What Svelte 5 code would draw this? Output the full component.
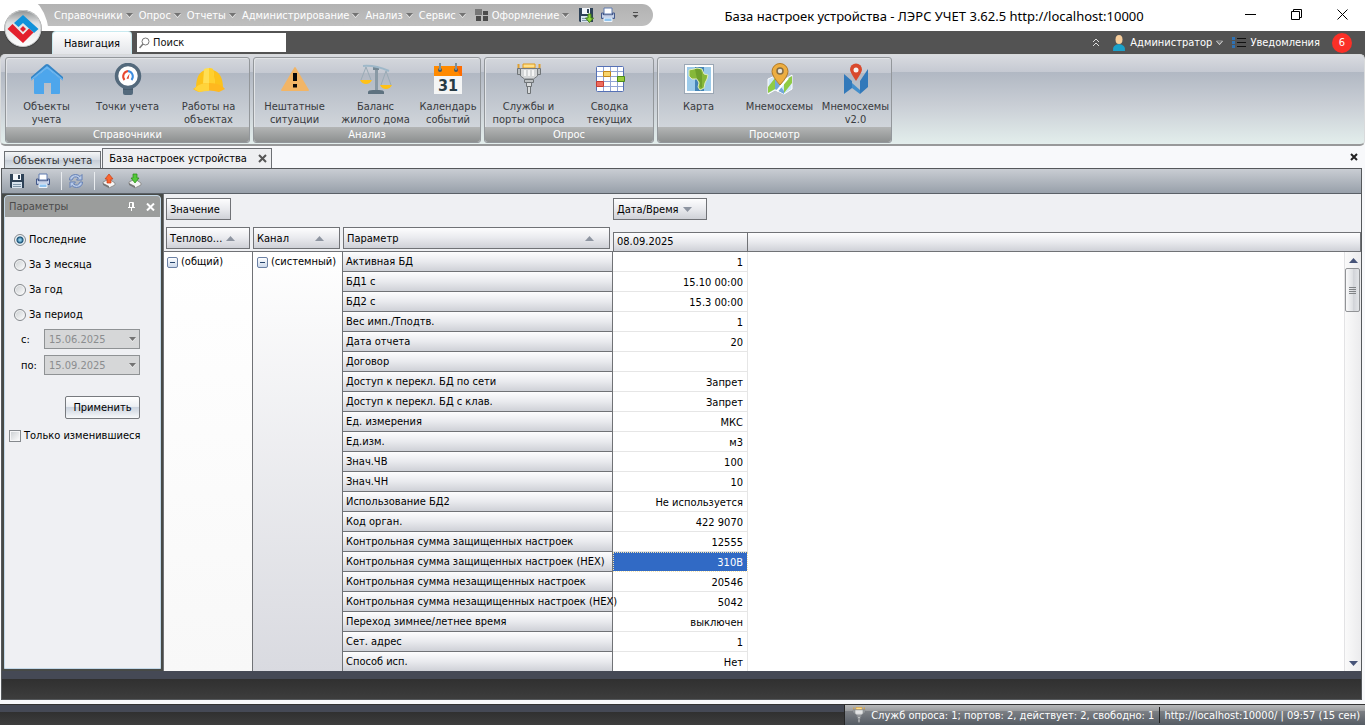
<script lang="ts">
  const menu = ["Справочники", "Опрос", "Отчеты", "Администрирование", "Анализ", "Сервис"];

  const ribbon = [
    {
      title: "Справочники",
      items: [
        { icon: "house", label: "Объекты\nучета" },
        { icon: "gauge", label: "Точки учета" },
        { icon: "helmet", label: "Работы на\nобъектах" },
      ],
    },
    {
      title: "Анализ",
      items: [
        { icon: "warning", label: "Нештатные\nситуации" },
        { icon: "scales", label: "Баланс\nжилого дома" },
        { icon: "calendar", label: "Календарь\nсобытий", size: "small" },
      ],
    },
    {
      title: "Опрос",
      roomy: true,
      items: [
        { icon: "port", label: "Службы и\nпорты опроса" },
        { icon: "grid", label: "Сводка\nтекущих" },
      ],
    },
    {
      title: "Просмотр",
      items: [
        { icon: "map", label: "Карта" },
        { icon: "pin", label: "Мнемосхемы" },
        { icon: "pin2", label: "Мнемосхемы\nv2.0", size: "medium" },
      ],
    },
  ];

  const rows = [
    ["Активная БД", "1"],
    ["БД1 с", "15.10 00:00"],
    ["БД2 с", "15.3 00:00"],
    ["Вес имп./Тподтв.", "1"],
    ["Дата отчета", "20"],
    ["Договор", ""],
    ["Доступ к перекл. БД по сети", "Запрет"],
    ["Доступ к перекл. БД с клав.", "Запрет"],
    ["Ед. измерения", "МКС"],
    ["Ед.изм.", "м3"],
    ["Знач.ЧВ", "100"],
    ["Знач.ЧН", "10"],
    ["Использование БД2", "Не используется"],
    ["Код орган.", "422 9070"],
    ["Контрольная сумма защищенных настроек", "12555"],
    ["Контрольная сумма защищенных настроек (HEX)", "310B"],
    ["Контрольная сумма незащищенных настроек", "20546"],
    ["Контрольная сумма незащищенных настроек (HEX)", "5042"],
    ["Переход зимнее/летнее время", "выключен"],
    ["Сет. адрес", "1"],
    ["Способ исп.", "Нет"],
  ];

  const ranges = ["Последние", "За 3 месяца", "За год", "За период"];

  let range = $state("Последние");
  let selectedRow = $state(15);
  let onlyChanged = $state(false);
  let search = $state("");
</script>

{#snippet arrow()}
  <svg class="arrow" width="7" height="5" viewBox="0 0 7 5" aria-hidden="true">
    <path d="M0 1 3.500 5 7 1z" fill="#eee" />
    <path d="M0 0h7L3.500 4z" fill="#737373" />
  </svg>
{/snippet}

{#snippet floppy(withArrow: boolean)}
  <svg width="16" height="16" viewBox="0 0 16 16" aria-hidden="true">
    <path d="M1 1h14v14H2l-1-1z" fill="#2e4257" />
    <path d="M4 1h8v6H4z" fill="#f2f6fa" />
    <path d="M9 2h2v4H9z" fill="#2e4257" />
    <path d="M3 9h10v6H3z" fill="#d7e3ee" />
    <path d="M4 11.500h8M4 13.500h8" stroke="#7e95a8" />
    {#if withArrow}
      <path d="M10 7h3v4h2.500l-4 4.500-4-4.500H10z" fill="#8fd23a" stroke="#3d7a16" />
    {/if}
  </svg>
{/snippet}

{#snippet printer()}
  <svg width="16" height="16" viewBox="0 0 16 16" aria-hidden="true">
    <path d="M4 1h8v6H4z" fill="#fff" stroke="#5e7bb0" />
    <path d="M1.500 6h2v2h9V6h2v5.500h-13z" fill="#a9b9d8" stroke="#44598a" />
    <path d="M2 9h12" stroke="#e4ecf8" />
    <path d="M4 11h8v3.500H4z" fill="#8fc4f0" stroke="#eef4fb" />
  </svg>
{/snippet}

{#snippet port(size: number)}
  <svg width={size} height={size} viewBox="0 0 32 32" aria-hidden="true">
    <path d="M10 1h12v4H10z" fill="#ffe08a" stroke="#e09a1c" />
    <path d="M5.500 1v4M26.500 1v4" stroke="#e0a030" stroke-width="2" />
    <path d="M4.500 5.500h3v6h-3zM24.500 5.500h3v6h-3z" fill="#b9bdbf" stroke="#707578" />
    <path d="M7.500 5.500h17V13l-4 3h-9l-4-3z" fill="#d4d6d7" stroke="#777b7e" />
    <path d="M11 7h2v6h-2zM15 7h2v6h-2zM19 7h2v6h-2z" fill="#f4f4f4" />
    <path d="M11.500 16.500h9v3h-9z" fill="#bcc0c2" stroke="#6e7376" />
    <path d="M13.500 19.500h5v4h-5zM14.500 23.500h3v7h-3z" fill="#d8dadb" stroke="#6e7376" />
  </svg>
{/snippet}

{#snippet ribbonIcon(name: string)}
  {#if name === "port"}
    {@render port(32)}
  {:else}
    <svg width="32" height="32" viewBox="0 0 32 32" aria-hidden="true">
      {#if name === "house"}
        <path d="M3 15.500 16 5l13 10.500V30q0 1-1 1h-8V20h-7v11H4q-1 0-1-1z" fill="#4da6ec" />
        <path d="M0 14 14.500 1.500q1.500-1 3 0L32 14v3.500L16 4.500 0 17.500z" fill="#3585c6" />
        <path d="M0 16 16 3l16 13v1.500L16 5 0 17.500z" fill="#67b7f5" />
      {:else if name === "gauge"}
        <path d="M11 22h10v8q0 2-2 2h-6q-2 0-2-2z" fill="#53697c" />
        <path d="M11 24h10v3H11z" fill="#465a6b" />
        <circle cx="16" cy="13" r="11.500" fill="#fff" stroke="#53697c" stroke-width="3.500" />
        <path d="M12.500 17A5.500 5.500 0 0 1 16 8" fill="none" stroke="#e8452f" stroke-width="2" />
        <path d="M16 8a5.500 5.500 0 0 1 3.500 9" fill="none" stroke="#3e8de0" stroke-width="2" />
        <path d="m14.500 15.500 3-5-1 5.500z" fill="#e0402c" />
      {:else if name === "helmet"}
        <path d="M3 25q0-15 9-18 4-2 8 0 10 3 10 18z" fill="#fcc21b" />
        <path d="M11 6q5-2 9 0l2 15H10z" fill="#ffdf55" />
        <path d="M16 5q2 0 4 1l2 15h-6z" fill="#ffd02d" />
        <path d="M3 24Q7 20 16 20t14 4l2 2q-4 2-6 3-10-3-20 0-3-1-6-3z" fill="#ffb81f" />
        <path d="M3 24Q7 20 16 20v8q-5 0-10 1l-5-3z" fill="#ffd43b" />
      {:else if name === "warning"}
        <path d="M15 5q1-2 2 0l13 22q0 1-1 1H3q-1 0-1-1z" fill="#f2b566" />
        <path d="M14 10h4v8h-4zM14 21h4v3.500h-4z" fill="#080808" />
      {:else if name === "scales"}
        <path d="M15 3h3v25h-3z" fill="#8999a5" />
        <path d="M13 4h6v3h-6z" fill="#758894" />
        <path d="M8 29q0-2 5-2h6q5 0 5 2v2H8z" fill="#5e7280" />
        <path d="M3 3q12-1 26 5" fill="none" stroke="#9eb8c9" stroke-width="2" />
        <path d="M6 4 1 17M6 4l5 13M26 8l-5 14m5-14 5 14" stroke="#9aabb6" fill="none" />
        <path d="M0 17h12q-2 4-6 4t-6-4zM20 22h12q-2 4-6 4t-6-4z" fill="#ffc117" />
      {:else if name === "calendar"}
        <path d="M2 3h28v12H2z" fill="#ff8a00" />
        <path d="M22 3h8v12z" fill="#ff6b00" />
        <path d="M2 13h28v18H2z" fill="#f4f5f5" />
        <circle cx="8" cy="7" r="2" fill="#455a64" />
        <circle cx="24" cy="7" r="2" fill="#455a64" />
        <path d="M8 0v7M24 0v7" stroke="#7b919d" stroke-width="2" />
        <text x="16" y="28" text-anchor="middle" class="day">31</text>
      {:else if name === "grid"}
        <rect x="2.500" y="3.500" width="27" height="25" rx="1" fill="#fff" stroke="#5570b5" />
        <path d="M3 8.500h26M3 13.500h26M3 18.500h26M3 23.500h26M9.500 4v24M16.500 4v24M23.500 4v24" stroke="#91a4d5" />
        <path d="M9.500 8.500h7v5h-7z" fill="#f8d46c" stroke="#c2861a" />
        <path d="M23.500 13.500h7v5h-7z" fill="#9acb3b" stroke="#4b8a1a" />
        <path d="M2.500 18.500h7v5h-7z" fill="#ee6d60" stroke="#c63c30" />
      {:else if name === "map"}
        <rect x="1.500" y="1.500" width="29" height="29" fill="#fdfefe" stroke="#9ba7b5" />
        <path d="M4 4h24v24H4z" fill="#9ccbea" />
        <path d="M12 4h9v24h-9z" fill="#4484b6" />
        <path
          d="m6 7 5-1 3-1 5 1 2 5 4 1-1 4-2 4-1 5-4 2-2-3 1-4-2-4-5 0-3-3z"
          fill="#86b83a"
          stroke="#e3edbd"
        />
        <path d="M12 6h5l2 4v15l-2-1v-5l-3-3z" fill="#55881f" opacity="0.500" />
      {:else if name === "pin"}
        <path d="m4 16 7-3 9 4 8-5v14l-8 5-9-4-7 4z" fill="#cfe6f8" stroke="#fff" />
        <path d="m4 24 7-9v11l-7 4zM20 18l8-5v7l-8 10z" fill="#8fcb46" />
        <path d="m11 16 9 12v3l-9-5z" fill="#73a7d9" />
        <path d="M24 15 13 28" stroke="#fff" stroke-width="2" />
        <path
          d="M16 22Q8 13 8 8.500a8 8 0 0 1 16 0Q24 13 16 22z"
          fill="#edae42"
          stroke="#b37922"
        />
        <circle cx="16" cy="8" r="3" fill="#e8e4da" stroke="#826c48" stroke-width="1.500" />
      {:else}
        <path d="m4 11 8 7v7l-8 6zM20 18l8-12v18l-8 7z" fill="#3279ba" />
        <path d="M12 20v5l8 6v-4z" fill="#438ecb" />
        <path d="M16 18Q10 9 10 6.500a6 6 0 0 1 12 0Q22 9 16 18z" fill="#d9492d" />
        <circle cx="16" cy="7" r="2.500" fill="#f7f2ef" />
      {/if}
    </svg>
  {/if}
{/snippet}

{#snippet sortMark(down: boolean)}
  <svg width="9" height="5" viewBox="0 0 9 5" aria-hidden="true">
    <path d={down ? "M0 0h9L4.5 5z" : "M0 5h9L4.5 0z"} fill="#8e95a1" />
  </svg>
{/snippet}

<div class="app">
  <header class="titlebar">
    <svg class="logo" width="52" height="54" viewBox="0 0 52 54" aria-label="ЛЭРС УЧЕТ">
      <defs>
        <linearGradient id="orb" x2="0" y2="1">
          <stop offset="0" stop-color="#8e9192" />
          <stop offset="0.350" stop-color="#dfe1e2" />
          <stop offset="1" stop-color="#fff" />
        </linearGradient>
      </defs>
      <path d="M0 0h34q12 10 15 31H0z" fill="#fff" />
      <circle cx="23" cy="29" r="19" fill="#343434" opacity="0.500" />
      <circle cx="23" cy="28.500" r="18" fill="url(#orb)" stroke="#c8cacb" />
      <path d="m23 15 15.500 14-4.500 4-11-10-4.500 4-4.500-4z" fill="#1192da" />
      <path d="m12.500 24 5 5 5.500 5.500 6-6 4.500 4L23 43 7.500 29z" fill="#e3202d" />
      <path d="m23 26 3 3-3 3-3-3z" fill="#e3202d" />
    </svg>
    <nav class="menu">
      {#each menu as item}
        <button>{item}{@render arrow()}</button>
      {/each}
      <button class="theme">
        <svg width="14" height="14" viewBox="0 0 14 14" aria-hidden="true">
          <path d="M0 1h7v6H0z" fill="#777" />
          <path d="M8 3h5v4H8zM1 8h5v5H1zM8 8h5v5H8z" fill="#4b4b4b" />
        </svg>
        Оформление{@render arrow()}
      </button>
      <button aria-label="Сохранить">{@render floppy(true)}</button>
      <button aria-label="Печать">{@render printer()}</button>
      <button class="customize" aria-label="Настройка">
        <svg width="7" height="8" viewBox="0 0 7 8" aria-hidden="true">
          <path d="M1 1.500h5" stroke="#4e4e4e" />
          <path d="M0.500 4h6l-3 3z" fill="#4e4e4e" />
        </svg>
      </button>
    </nav>
    <h1>База настроек устройства - ЛЭРС УЧЕТ 3.62.5 http://localhost:10000</h1>
    <div class="window-buttons">
      <button aria-label="Свернуть">
        <svg width="11" height="11" viewBox="0 0 11 11"><path d="M0 5.500h11" stroke="#000" /></svg>
      </button>
      <button aria-label="Восстановить">
        <svg width="11" height="11" viewBox="0 0 11 11">
          <path d="M0.500 2.500h8v8h-8zM2.500 2V0.500h8v8H9" fill="none" stroke="#000" />
        </svg>
      </button>
      <button aria-label="Закрыть">
        <svg width="11" height="11" viewBox="0 0 11 11">
          <path d="m0.500 0.500 10 10m0-10-10 10" stroke="#000" />
        </svg>
      </button>
    </div>
  </header>

  <div class="ribbon-tabs">
    <button class="ribbon-tab">Навигация</button>
    <label class="search">
      <svg width="11" height="12" viewBox="0 0 11 12" aria-hidden="true">
        <circle cx="6.500" cy="4.500" r="3.500" fill="none" stroke="#777" />
        <path d="m4 7-3.500 4" stroke="#777" stroke-width="1.500" />
      </svg>
      <input type="text" placeholder="Поиск" aria-label="Поиск" bind:value={search} />
    </label>
    <div class="account">
      <button class="collapse" aria-label="Свернуть ленту">
        <svg width="8" height="9" viewBox="0 0 8 9">
          <path d="m1 4 3-3 3 3M1 8l3-3 3 3" fill="none" stroke="#ddd" />
        </svg>
      </button>
      <button>
        <svg width="14" height="16" viewBox="0 0 14 16" aria-hidden="true">
          <path d="M1 16q-1-6 6-7 7 1 6 7z" fill="#1ba1c9" />
          <ellipse cx="7" cy="4.500" rx="3.500" ry="4.500" fill="#f7cd9b" />
        </svg>
        Администратор{@render arrow()}
      </button>
      <button>
        <svg width="14" height="11" viewBox="0 0 14 11" aria-hidden="true">
          <path d="M0 0h3v3H0zM0 4h3v3H0zM0 8h3v3H0z" fill="#2f72b4" />
          <path d="M5 1.500h9M5 5.500h9M5 9.500h9" stroke="#111" />
        </svg>
        Уведомления
        <span class="badge">6</span>
      </button>
    </div>
  </div>

  <div class="ribbon">
    {#each ribbon as group}
      <section class="group" class:roomy={group.roomy}>
        <div class="group-items">
          {#each group.items as item}
            <button class="ribbon-button {item.size ?? ''}">
              {@render ribbonIcon(item.icon)}
              <span>{item.label}</span>
            </button>
          {/each}
        </div>
        <h2>{group.title}</h2>
      </section>
    {/each}
  </div>

  <div class="tabs">
    <button class="tab">Объекты учета</button>
    <div class="tab active">
      <span>База настроек устройства</span>
      <button aria-label="Закрыть вкладку">
        <svg width="9" height="9" viewBox="0 0 9 9">
          <path d="m1 1 7 7m0-7-7 7" stroke="#555" stroke-width="2" />
        </svg>
      </button>
    </div>
    <button class="close-all" aria-label="Закрыть">
      <svg width="8" height="8" viewBox="0 0 8 8">
        <path d="m1 1 6 6m0-6-6 6" stroke="#222" stroke-width="2" />
      </svg>
    </button>
  </div>

  <main class="document">
    <div class="toolbar">
      <button aria-label="Сохранить">{@render floppy(false)}</button>
      <button aria-label="Печать">{@render printer()}</button>
      <span class="divider"></span>
      <button aria-label="Обновить">
        <svg width="16" height="16" viewBox="0 0 16 16">
          <path
            d="M1.500 7q0-5 6-5.500 3 0 4.500 2l2-2V7H8.500l2-2Q6 2 4 7zM14.500 9q0 5-6 5.500-3 0-4.500-2l-2 2V9h5.500l-2 2q4.500 3 6.500-2z"
            fill="#b8cae8"
            stroke="#6480b5"
          />
        </svg>
      </button>
      <span class="divider"></span>
      {#each ["up", "down"] as direction}
        <button aria-label={direction === "up" ? "Выгрузить" : "Загрузить"}>
          <svg width="16" height="16" viewBox="0 0 16 16">
            <path d="m2 9 6-3 6 4v2l-6 3-6-4z" fill="#f5f5f5" stroke="#909090" />
            <path d="m2 10 6 3v2l-6-3z" fill="#777" />
            {#if direction === "up"}
              <path d="m8 1 4 5h-2v4H6V6H4z" fill="#fa6530" stroke="#c93d14" stroke-width="0.700" />
            {:else}
              <path d="M6 1h4v4h2l-4 5-4-5h2z" fill="#54c83a" stroke="#268b16" stroke-width="0.700" />
            {/if}
          </svg>
        </button>
      {/each}
    </div>

    <div class="workspace">
      <aside class="panel">
        <div class="panel-title">
          <h2>Параметры</h2>
          <button aria-label="Закрепить">
            <svg width="7" height="9" viewBox="0 0 7 9">
              <path d="M1.500 0.500h4v5M1.500 0.500v5M0 5.500h7M3.500 5.500V9" fill="none" stroke="#fff" />
              <path d="M4.500 1v4" stroke="#fff" />
            </svg>
          </button>
          <button aria-label="Закрыть панель">
            <svg width="9" height="8" viewBox="0 0 9 8">
              <path d="m1 0.500 7 7m0-7-7 7" stroke="#fff" stroke-width="2" />
            </svg>
          </button>
        </div>
        <form class="filters" onsubmit={(e) => e.preventDefault()}>
          {#each ranges as name}
            <label class="choice">
              <input type="radio" name="range" value={name} bind:group={range} />
              {name}
            </label>
          {/each}
          <div class="date-row">
            <label for="dateFrom">с:</label>
            <div class="date">
              <select id="dateFrom" disabled={range !== "За период"}>
                <option>15.06.2025</option>
              </select>
              {@render arrow()}
            </div>
          </div>
          <div class="date-row">
            <label for="dateTo">по:</label>
            <div class="date">
              <select id="dateTo" disabled={range !== "За период"}>
                <option>15.09.2025</option>
              </select>
              {@render arrow()}
            </div>
          </div>
          <button class="apply" type="submit">Применить</button>
          <label class="choice changed">
            <input type="checkbox" bind:checked={onlyChanged} />
            Только изменившиеся
          </label>
        </form>
      </aside>

      <section class="pivot">
        <div class="pivot-head">
          <div class="row-fields">
            <button class="field value-field">Значение</button>
            <div class="field-line">
              <button class="field">Теплово...{@render sortMark(false)}</button>
              <button class="field">Канал{@render sortMark(false)}</button>
              <button class="field">Параметр{@render sortMark(false)}</button>
            </div>
          </div>
          <div class="column-fields">
            <button class="field date-field">Дата/Время{@render sortMark(true)}</button>
            <div class="column-head" id="dateColumn"><span>08.09.2025</span></div>
          </div>
        </div>
        <div class="pivot-body">
          <div class="table-wrap">
            <table aria-describedby="dateColumn">
              <tbody>
                {#each rows as [name, value], i}
                  <tr>
                    {#if i === 0}
                      <th class="node" rowspan={rows.length}>
                        <button class="expander" aria-label="Свернуть"></button>(общий)
                      </th>
                      <th class="node channel" rowspan={rows.length}>
                        <button class="expander" aria-label="Свернуть"></button>(системный)
                      </th>
                    {/if}
                    <th class="name" scope="row">{name}</th>
                    <td class:selected={i === selectedRow} onclick={() => (selectedRow = i)}>
                      {value}
                    </td>
                  </tr>
                {/each}
              </tbody>
            </table>
          </div>
          <div class="scrollbar">
            <button aria-label="Вверх">
              <svg width="9" height="5" viewBox="0 0 9 5"><path d="M0 5h9L4.500 0z" fill="#465378" /></svg>
            </button>
            <div class="thumb"></div>
            <button class="down" aria-label="Вниз">
              <svg width="9" height="5" viewBox="0 0 9 5"><path d="M0 0h9L4.500 5z" fill="#465378" /></svg>
            </button>
          </div>
        </div>
      </section>
    </div>
    <div class="document-foot"></div>
  </main>

  <footer class="statusbar">
    <div class="status">
      <span class="polling">{@render port(16)}Служб опроса: 1; портов: 2, действует: 2, свободно: 1</span>
      <span class="server">http://localhost:10000/ | 09:57 (15 сен)</span>
    </div>
  </footer>
</div>

<style>
  :global(body) {
    margin: 0;
  }

  .app {
    --line: #707276;
    --field: linear-gradient(#fdfdfe, #e9eaee 50%, #cfd1d7);
    display: flex;
    flex-direction: column;
    height: 100vh;
    overflow: hidden;
    background: #f8f9fb;
    color: #000;
    font-family: "DejaVu Sans Condensed", "DejaVu Sans", sans-serif;
    font-size: 11px;
    line-height: 13px;
  }

  .app * {
    box-sizing: border-box;
  }

  button,
  input,
  select {
    margin: 0;
    padding: 0;
    border: 0;
    background: none;
    color: inherit;
    font: inherit;
  }

  h1,
  h2 {
    margin: 0;
    font-size: inherit;
    font-weight: normal;
  }

  svg {
    flex: none;
  }

  .titlebar {
    position: relative;
    display: flex;
    height: 31px;
    flex: none;
    background: #fff;
  }

  .logo {
    position: absolute;
    top: 0;
    left: 0;
    z-index: 1;
  }

  .menu {
    display: flex;
    align-items: center;
    gap: 6px;
    height: 22px;
    margin-top: 4px;
    padding: 0 14px 0 54px;
    border-radius: 0 11px 11px 0;
    background: linear-gradient(#b2b2b2, #bfbfbf);
    color: #fff;
  }

  .menu button {
    display: flex;
    align-items: center;
    gap: 3px;
  }

  .menu .theme {
    margin: 0 3px;
  }

  .menu .customize {
    margin-left: 10px;
  }

  .titlebar h1 {
    flex: 1;
    min-width: 0;
    padding-right: 12px;
    overflow: hidden;
    font-family: "Noto Sans", "Open Sans", sans-serif;
    font-size: 13px;
    line-height: 32px;
    text-align: center;
    white-space: nowrap;
  }

  .window-buttons {
    display: flex;
  }

  .window-buttons button {
    width: 46px;
  }

  /* runs under the ribbon so its rounded corners sit on the dark strip */
  .ribbon-tabs {
    display: flex;
    flex: none;
    align-items: flex-start;
    height: 28px;
    margin-bottom: -5px;
    padding-left: 52px;
    background: #535353;
  }

  .ribbon-tab {
    width: 80px;
    height: 23px;
    border: 1px solid #c9eaf0;
    border-bottom: 0;
    border-radius: 4px 4px 0 0;
    background: linear-gradient(#fff, #e3e5e9);
  }

  .search {
    display: flex;
    align-items: center;
    gap: 3px;
    width: 149px;
    height: 19px;
    margin: 2px 0 0 5px;
    padding-left: 2px;
    background: #fff;
  }

  .search input {
    width: 100%;
    min-width: 0;
    outline: none;
  }

  .search input::placeholder {
    color: #111;
  }

  .account {
    display: flex;
    align-items: center;
    gap: 9px;
    height: 23px;
    margin-left: auto;
    padding-right: 13px;
    color: #fff;
  }

  .account button {
    display: flex;
    align-items: center;
    gap: 4px;
  }

  .account .collapse {
    margin-right: 3px;
  }

  .badge {
    width: 20px;
    margin-left: 8px;
    border-radius: 50%;
    background: #fb3027;
    line-height: 20px;
  }

  .ribbon {
    position: relative;
    display: flex;
    flex: none;
    gap: 3px;
    height: 92px;
    padding: 2px 4px 1px;
    border: 1px solid #d8dadb;
    border-bottom: 2px solid #98999a;
    border-radius: 5px;
    background: linear-gradient(#d9dbe0, #c5c9d2 17px, #b1b8c3 17px, #c9ced5 50px, #e3eeec);
  }

  .group {
    display: flex;
    flex-direction: column;
    border: 1px solid #93979b;
    border-radius: 3px;
    background: linear-gradient(#d4d7dc, #c5c9d2 15px, #b1b8c3 15px, #d9dde1);
    box-shadow: inset 1px 1px 0 #e2e4e7;
  }

  .roomy .group-items {
    padding: 0 3px;
  }

  .group-items {
    display: flex;
    flex: 1;
  }

  .group h2 {
    height: 15px;
    border-radius: 0 0 3px 3px;
    background: linear-gradient(#b3b5b5, #8d9090);
    color: #fff;
    line-height: 15px;
    text-align: center;
  }

  .ribbon-button {
    display: flex;
    flex-direction: column;
    align-items: center;
    gap: 5px;
    width: 81px;
    padding-top: 5px;
    color: #393b40;
    white-space: pre;
  }

  .ribbon-button.small {
    width: 64px;
  }

  .ribbon-button.medium {
    width: 71px;
  }

  .day {
    fill: #263b45;
    font-family: "DejaVu Sans Condensed", sans-serif;
    font-size: 16px;
    font-weight: bold;
  }

  .tabs {
    display: flex;
    flex: none;
    align-items: flex-end;
    gap: 1px;
    height: 22px;
    padding: 0 7px 0 4px;
  }

  .tab {
    height: 17px;
    padding: 0 8px;
    border: 1px solid #6d7074;
    border-bottom: 0;
    background: linear-gradient(#f5f6f7, #d4dae2 50%, #c5ccd6 50%, #dce3e8);
    color: #333;
    line-height: 17px;
  }

  .tab.active {
    display: flex;
    align-items: center;
    gap: 11px;
    height: 20px;
    padding: 0 4px 0 6px;
    background: #eeeff1;
    color: #000;
  }

  .tab button {
    display: flex;
  }

  .close-all {
    margin-left: auto;
    padding-bottom: 4px;
  }

  .document {
    display: flex;
    flex: 1;
    flex-direction: column;
    min-height: 0;
    margin: 0 3px 0 1px;
    border: 1px solid #55585b;
  }

  .toolbar {
    display: flex;
    flex: none;
    align-items: center;
    gap: 10px;
    height: 25px;
    padding: 0 7px;
    border-bottom: 1px solid #5a6067;
    background: linear-gradient(#c9cdd3, #98a0aa);
  }

  .toolbar button {
    display: flex;
  }

  .divider {
    width: 1px;
    height: 18px;
    margin-right: -4px;
    background: #e9ecef;
  }

  .workspace {
    display: flex;
    flex: 1;
    min-height: 0;
    background: #474a47;
  }

  .panel {
    width: 157px;
    margin: 1px 1px 2px 2px;
    border: 1px solid #c3d8e8;
    border-radius: 4px 4px 0 0;
    background: #eff0f3;
  }

  .panel-title {
    display: flex;
    align-items: center;
    gap: 11px;
    height: 21px;
    padding: 0 5px 0 4px;
    border-radius: 3px 3px 0 0;
    background: #9b9d9c;
    color: #4b4b4b;
  }

  .panel-title h2 {
    flex: 1;
  }

  .panel-title button {
    display: flex;
  }

  .filters {
    display: flex;
    flex-direction: column;
    padding: 10px 4px;
  }

  .choice {
    display: flex;
    align-items: center;
    gap: 3px;
    height: 25px;
    padding-left: 5px;
  }

  .choice input {
    flex: none;
    width: 12px;
    height: 12px;
    border: 1px solid #85898d;
    appearance: none;
    background: linear-gradient(135deg, #c9cdd0, #fff);
    box-shadow: inset 0 0 0 1px #f5f6f7;
  }

  .choice input[type="radio"] {
    border-radius: 50%;
  }

  .choice input[type="radio"]:checked {
    background: radial-gradient(circle, #8ccbe8 1px, #174e73 3px, #c9dce7 4px);
  }

  .choice input[type="checkbox"]:checked {
    background: #174e73;
  }

  .date-row {
    display: flex;
    align-items: center;
    height: 20px;
    margin-top: 6px;
    padding-left: 12px;
  }

  .choice + .date-row {
    margin-top: 2px;
  }

  .date-row label {
    width: 23px;
  }

  .date {
    display: grid;
    align-items: center;
    width: 96px;
  }

  .date select,
  .date :global(svg) {
    grid-area: 1 / 1;
  }

  .date :global(svg) {
    z-index: 1;
    justify-self: end;
    margin-right: 4px;
    pointer-events: none;
  }

  .date select {
    height: 20px;
    padding-left: 4px;
    border: 1px solid #8f9294;
    border-radius: 0;
    appearance: none;
    background: #d6d7d8;
    color: #8b8d8f;
    opacity: 1;
  }

  .apply {
    align-self: flex-end;
    width: 75px;
    height: 23px;
    margin: 21px 16px 4px 0;
    border: 1px solid #777a7e;
    border-radius: 2px;
    background: linear-gradient(#fff, #eceff3 45%, #ccd4df 50%, #f7f9fa);
  }

  .choice.changed {
    padding-left: 0;
  }

  .pivot {
    display: flex;
    flex: 1;
    flex-direction: column;
    min-width: 0;
    margin-left: 1px;
    border-left: 1px solid var(--line);
    background: #eff0f3;
  }

  .pivot-head {
    display: flex;
    height: 58px;
  }

  .row-fields {
    width: 449px;
    padding: 4px 2px 0;
    border-bottom: 1px solid var(--line);
  }

  .field {
    display: flex;
    align-items: center;
    gap: 4px;
    height: 22px;
    padding: 0 3px;
    border: 1px solid var(--line);
    background: var(--field);
  }

  .value-field {
    width: 65px;
  }

  .field-line {
    display: grid;
    grid-template-columns: 84px 87px 267px;
    gap: 3px;
    margin-top: 7px;
  }

  .field-line .field {
    justify-content: space-between;
    padding-right: 15px;
  }

  .column-fields {
    display: flex;
    flex: 1;
    flex-direction: column;
    justify-content: space-between;
    padding-top: 4px;
  }

  .date-field {
    width: 94px;
  }

  .column-head {
    display: flex;
    height: 20px;
    border: 1px solid var(--line);
    background: var(--field);
    line-height: 18px;
  }

  .column-head span {
    width: 134px;
    padding-left: 3px;
    border-right: 1px solid var(--line);
  }

  .pivot-body {
    display: flex;
    flex: 1;
    min-height: 0;
    background: #fff;
  }

  .table-wrap {
    flex: 1;
    min-width: 0;
    overflow: hidden;
  }

  table {
    width: 584px;
    border-spacing: 0;
    table-layout: fixed;
  }

  th,
  td {
    height: 20px;
    padding: 0;
    font-weight: normal;
    text-align: left;
    white-space: nowrap;
  }

  .node {
    width: 89px;
    padding: 3px 0 0 3px;
    border-right: 1px solid var(--line);
    background: linear-gradient(#fff, #f8f8f8);
    vertical-align: top;
  }

  .channel {
    width: 90px;
    padding-left: 4px;
    background: linear-gradient(#fff, #d9dae0);
  }

  .expander {
    width: 11px;
    height: 11px;
    margin-right: 3px;
    border: 1px solid #6b80a4;
    border-radius: 2px;
    background:
      linear-gradient(#26456e, #26456e) center / 5px 1px no-repeat,
      linear-gradient(#fff, #cbd8ea);
    vertical-align: -2px;
  }

  .name {
    width: 270px;
    padding-left: 3px;
    border-right: 1px solid var(--line);
    border-bottom: 1px solid var(--line);
    background: var(--field);
  }

  td {
    padding: 2px 4px 0 0;
    border-right: 1px solid #e6e6e6;
    border-bottom: 1px solid #e6e6e6;
    text-align: right;
  }

  td.selected {
    border-color: #fff;
    background: #316ac5;
    background-clip: padding-box;
    color: #fff;
    outline: 1px dotted #f5e3ac;
    outline-offset: -1px;
  }

  .scrollbar {
    display: flex;
    flex-direction: column;
    width: 17px;
    border-left: 1px solid #e3e3e5;
    background: linear-gradient(90deg, #fafafa, #ebebed);
  }

  .scrollbar button {
    display: flex;
    align-items: center;
    justify-content: center;
    height: 16px;
  }

  .scrollbar .down {
    margin-top: auto;
  }

  .thumb {
    height: 44px;
    margin-right: 1px;
    border: 1px solid #919396;
    border-radius: 2px;
    background:
      repeating-linear-gradient(#808386 0 1px, transparent 1px 2px) center / 7px 7px no-repeat,
      linear-gradient(90deg, #fafafb, #dfe1e4 50%, #cfd1d6 50%, #e3e5e8);
  }

  .document-foot {
    flex: none;
    height: 28px;
    background: linear-gradient(#454955 8px, #303030 8px, #3d3d3d);
  }

  .statusbar {
    display: flex;
    flex: none;
    justify-content: flex-end;
    height: 21px;
    margin-top: 4px;
    border-top: 1px solid #333;
    background: linear-gradient(#454955 7px, #303030 7px, #3d3d3d);
  }

  .status {
    display: flex;
    align-items: center;
    border-left: 1px solid #252525;
    background: linear-gradient(#b8b9ba, #999b9d 6px, #7d8085 6px, #555c64);
    color: #fff;
  }

  .polling {
    display: flex;
    align-items: center;
    gap: 4px;
    padding: 0 5px 0 6px;
    border-right: 1px solid #222;
  }

  .server {
    padding: 0 5px 0 4px;
  }
</style>
